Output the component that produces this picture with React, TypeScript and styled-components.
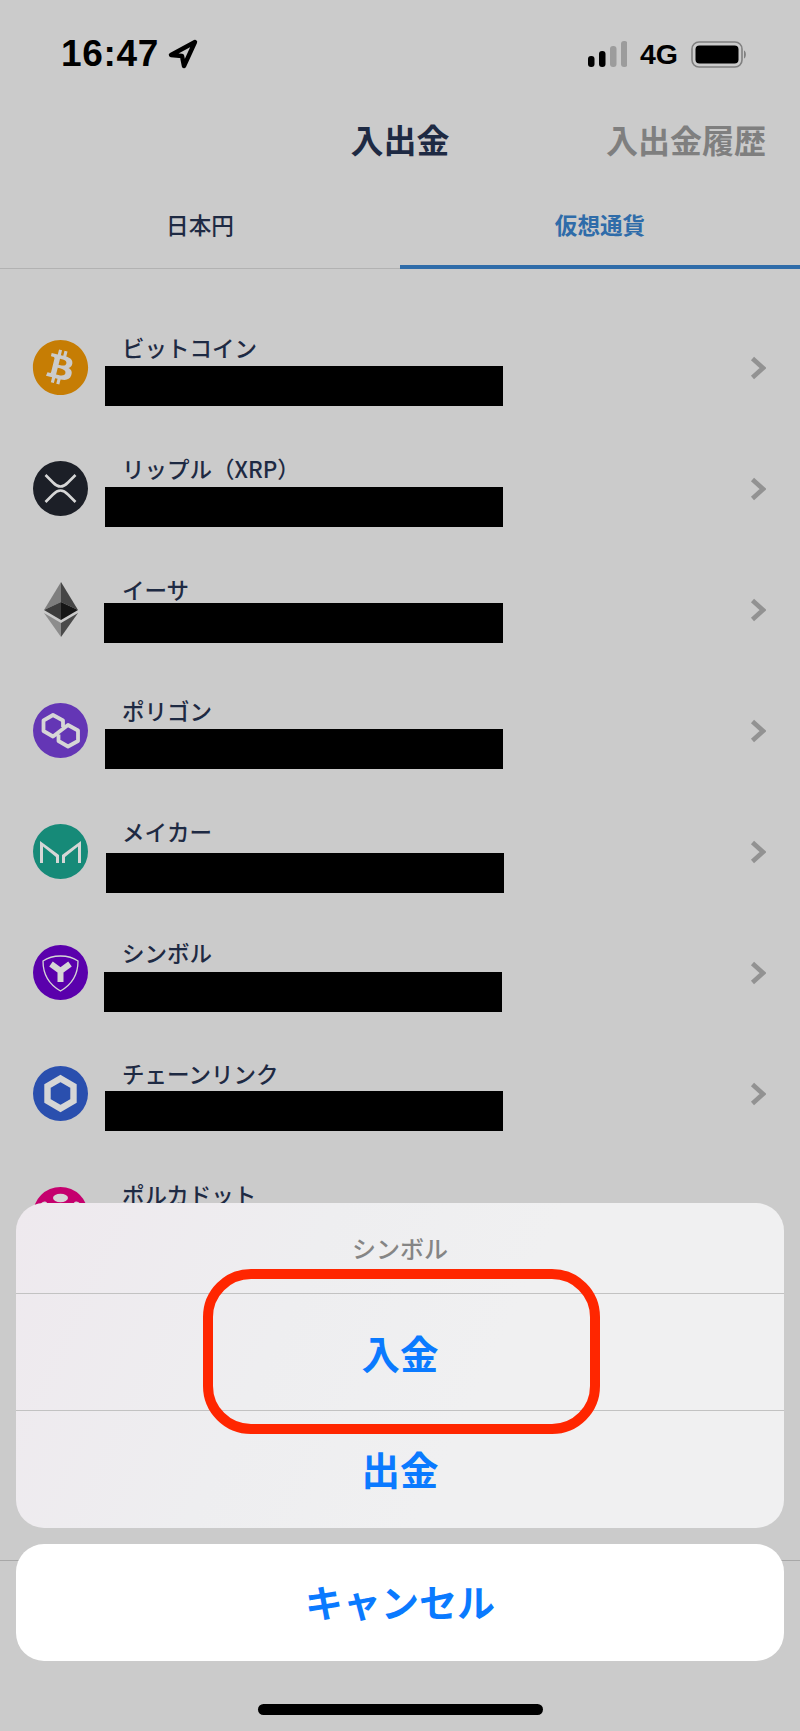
import React from 'react';
import styled, { createGlobalStyle } from 'styled-components';
import { FaBitcoin } from 'react-icons/fa';

const GlobalStyle = createGlobalStyle`
    html, body {
        margin: 0;
        padding: 0;
        background: #cbcbcb;
    }
    * {
        box-sizing: border-box;
    }
`;

const Page = styled.div`
    position: relative;
    width: 800px;
    height: 1731px;
    overflow: hidden;
    background: #cbcbcb;
    font-family: 'Noto Sans CJK JP', 'Liberation Sans', sans-serif;
    color: #1e2a43;
`;

const StatusBar = styled.div`
    height: 106px;
    padding: 2px 53px 0 61px;
    display: flex;
    align-items: center;
    justify-content: space-between;
    color: #000;
    font-family: 'Liberation Sans', sans-serif;
    font-weight: 700;
`;

const StatusGroup = styled.div`
    display: flex;
    align-items: center;
    gap: ${(p: { $gap: number }) => p.$gap}px;
`;

const Time = styled.span`
    font-size: 37px;
    letter-spacing: 0.7px;
    line-height: 40px;
`;

const Network = styled.span`
    margin: 0 1px;
    font-size: 28.5px;
    line-height: 30px;
`;

const NavBar = styled.div`
    height: 70px;
    padding: 0 34px 4px 0;
    display: grid;
    grid-template-columns: 1fr auto 1fr;
    align-items: center;
`;

const NavTitle = styled.div`
    grid-column: 2;
    font-size: 33px;
    line-height: 40px;
    font-weight: 700;
    margin-left: 34px;
`;

const NavLink = styled.div`
    justify-self: end;
    font-size: 32px;
    line-height: 40px;
    font-weight: 700;
    color: #7f7f7f;
`;

const Tabs = styled.div`
    height: 93px;
    display: flex;
    border-bottom: 1px solid #b2b2b2;
`;

const Tab = styled.div<{ $active?: boolean }>`
    flex: 1;
    height: ${(p) => (p.$active ? 93 : 92)}px;
    padding-top: 34px;
    text-align: center;
    font-size: 22.6px;
    line-height: 30px;
    font-weight: ${(p) => (p.$active ? 700 : 500)};
    color: ${(p) => (p.$active ? '#2f6ca9' : '#1e2a43')};
    border-bottom: ${(p) => (p.$active ? '4px solid #2f6ca9' : 'none')};
`;

const CoinList = styled.div`
    padding-top: 38px;
`;

const CoinRow = styled.div`
    position: relative;
    height: 121px;
    padding: 0 34px 0 33px;
    display: grid;
    grid-template-columns: 55px 1fr 16px;
    align-items: center;
`;

const IconBox = styled.div`
    width: 55px;
    height: 55px;
    display: flex;
    align-items: center;
    justify-content: center;
`;

const CoinName = styled.div`
    margin: 0 0 42px 34px;
    font-size: 22.5px;
    line-height: 28px;
    font-weight: 500;
    white-space: nowrap;
`;

// black bars painted over the balances
const Redaction = styled.div<{ $top: number; $left: number; $right: number }>`
    position: absolute;
    top: ${(p) => p.$top}px;
    left: ${(p) => p.$left}px;
    width: ${(p) => p.$right - p.$left}px;
    height: 40px;
    background: #000;
`;

const TabBarLine = styled.div`
    position: absolute;
    left: 0;
    right: 0;
    top: 1560px;
    height: 1px;
    background: #a8a8a8;
`;

const Sheet = styled.div`
    position: absolute;
    left: 16px;
    right: 16px;
    top: 1203px;
    display: flex;
    flex-direction: column;
    gap: 16px;
`;

const ActionGroup = styled.div`
    height: 325px;
    border-radius: 28px;
    overflow: hidden;
    background: linear-gradient(115deg, #eee9ee 0%, #eeeef0 35%, #f0f0f1 60%, #f0f0f1 100%);
    display: flex;
    flex-direction: column;
`;

const SheetTitle = styled.div`
    height: 91px;
    padding-bottom: 2px;
    display: flex;
    align-items: center;
    justify-content: center;
    font-size: 24px;
    font-weight: 500;
    color: #858585;
    border-bottom: 1px solid #c2c2c2;
`;

const SheetAction = styled.div<{ $divider?: boolean }>`
    height: 117px;
    padding-bottom: ${(p) => (p.$divider ? 0 : 4)}px;
    display: flex;
    align-items: center;
    justify-content: center;
    font-size: 38.5px;
    font-weight: 700;
    color: #0a7aff;
    border-bottom: ${(p) => (p.$divider ? '1px solid #c2c2c2' : 'none')};
`;

const CancelButton = styled.div`
    height: 117px;
    padding-bottom: 4px;
    border-radius: 28px;
    background: #fff;
    display: flex;
    align-items: center;
    justify-content: center;
    font-size: 38px;
    font-weight: 700;
    color: #0a7aff;
`;

const Highlight = styled.div`
    position: absolute;
    left: 203px;
    top: 1269px;
    width: 397px;
    height: 165px;
    border: 10px solid #ff2600;
    border-radius: 48px;
`;

const HomeIndicator = styled.div`
    position: absolute;
    left: 258px;
    top: 1704px;
    width: 285px;
    height: 11px;
    border-radius: 6px;
    background: #000;
`;

const BitcoinGlyph = styled(FaBitcoin)`
    flex-shrink: 0;
`;

const GLYPH = '#d6d6d6';

const Disc: React.FC<{ color: string; children?: React.ReactNode }> = ({ color, children }) => (
    <svg width="55" height="55" viewBox="0 0 55 55">
        <circle cx="27.5" cy="27.5" r="27.5" fill={color} />
        {children}
    </svg>
);

const BitcoinIcon = () => <BitcoinGlyph size={57} color="#c67d04" />;

const XrpIcon = () => (
    <Disc color="#1c1f27">
        <path
            d="M12.5 14 L20 21.5 Q27.5 29.5 35 21.5 L42.5 14 M12.5 41 L20 33.5 Q27.5 25.5 35 33.5 L42.5 41"
            fill="none"
            stroke={GLYPH}
            strokeWidth="2.6"
        />
    </Disc>
);

const EthereumIcon = () => (
    <svg width="34" height="55" viewBox="0 0 34 55">
        <polygon points="17,0 0,28 17,20" fill="#7e7e7e" />
        <polygon points="17,0 34,28 17,20" fill="#454545" />
        <polygon points="0,28 17,20 17,38" fill="#3d3d3d" />
        <polygon points="34,28 17,20 17,38" fill="#161616" />
        <polygon points="0,31 17,41 17,55" fill="#8c8c8c" />
        <polygon points="34,31 17,41 17,55" fill="#4a4a4a" />
    </svg>
);

const PolygonIcon = () => (
    <Disc color="#6436b5">
        <path
            d="M30 24V17.5L20 12L10.5 17.5V28L20 33.5L35 22L45 27.5V38L35 43.5L25.5 38V31.5"
            fill="none"
            stroke={GLYPH}
            strokeWidth="3.8"
            strokeLinejoin="round"
        />
    </Disc>
);

const MakerIcon = () => (
    <Disc color="#168a78">
        <path d="M7 39V17L26 31V39H23V33L10 22.5V39Z" fill={GLYPH} />
        <path d="M48 39V17L29 31V39H32V33L45 22.5V39Z" fill={GLYPH} />
    </Disc>
);

const SymbolIcon = () => (
    <Disc color="#5a00ac">
        <path
            d="M27.5 11 Q38 11 45 16 Q45 36 27.5 46 Q10 36 10 16 Q17 11 27.5 11Z"
            fill="none"
            stroke={GLYPH}
            strokeWidth="1.3"
        />
        <path d="M18 19 L27.5 26 L37 19 M27.5 26 V37" fill="none" stroke={GLYPH} strokeWidth="6" />
    </Disc>
);

const ChainlinkIcon = () => (
    <Disc color="#2a4fae">
        <polygon
            points="27.5,12.5 40.5,20 40.5,35 27.5,42.5 14.5,35 14.5,20"
            fill="none"
            stroke={GLYPH}
            strokeWidth="6.4"
        />
    </Disc>
);

const PolkadotIcon = () => (
    <Disc color="#c5006e">
        <ellipse cx="27.5" cy="11" rx="7.5" ry="4.2" fill={GLYPH} />
        <ellipse cx="10" cy="20" rx="6" ry="3.8" fill={GLYPH} transform="rotate(-60 10 20)" />
        <ellipse cx="45" cy="20" rx="6" ry="3.8" fill={GLYPH} transform="rotate(60 45 20)" />
    </Disc>
);

const Chevron = () => (
    <svg width="16" height="24" viewBox="0 0 16 24">
        <path d="M2.5 2.5 L13 12 L2.5 21.5" fill="none" stroke="#929292" strokeWidth="4.6" />
    </svg>
);

const LocationArrow = () => (
    <svg width="30" height="30" viewBox="0 0 30 30">
        <path d="M27 3 L3 16 L14 17 L16 27 Z" fill="none" stroke="#000" strokeWidth="4.4" strokeLinejoin="round" />
    </svg>
);

const SignalBars = () => (
    <svg width="39" height="26" viewBox="0 0 39 26">
        <rect x="0" y="15" width="6.5" height="11" rx="3" fill="#000" />
        <rect x="11" y="10" width="6.5" height="16" rx="3" fill="#000" />
        <rect x="22" y="5" width="6.5" height="21" rx="3" fill="#9c9c9c" />
        <rect x="33" y="0" width="6.5" height="26" rx="3" fill="#9c9c9c" />
    </svg>
);

const Battery = () => (
    <svg width="56" height="27" viewBox="0 0 56 27">
        <rect x="1" y="1" width="50" height="25" rx="7" fill="none" stroke="#808080" strokeWidth="1.6" />
        <rect x="4.5" y="4.5" width="43" height="18" rx="4" fill="#000" />
        <path d="M53 9.5 C55.5 10.5 55.5 16.5 53 17.5 Z" fill="#808080" />
    </svg>
);

const coins = [
    { name: 'ビットコイン', icon: <BitcoinIcon />, top: 59, left: 105, right: 503 },
    { name: 'リップル（XRP）', icon: <XrpIcon />, top: 59, left: 105, right: 503 },
    { name: 'イーサ', icon: <EthereumIcon />, top: 54, left: 104, right: 503 },
    { name: 'ポリゴン', icon: <PolygonIcon />, top: 59, left: 105, right: 503 },
    { name: 'メイカー', icon: <MakerIcon />, top: 62, left: 106, right: 504 },
    { name: 'シンボル', icon: <SymbolIcon />, top: 60, left: 104, right: 502 },
    { name: 'チェーンリンク', icon: <ChainlinkIcon />, top: 58, left: 105, right: 503 },
    { name: 'ポルカドット', icon: <PolkadotIcon /> },
];

const App: React.FC = () => {
    return (
        <Page>
            <GlobalStyle />
            <StatusBar>
                <StatusGroup $gap={9}>
                    <Time>16:47</Time>
                    <LocationArrow />
                </StatusGroup>
                <StatusGroup $gap={12}>
                    <SignalBars />
                    <Network>4G</Network>
                    <Battery />
                </StatusGroup>
            </StatusBar>
            <NavBar>
                <NavTitle>入出金</NavTitle>
                <NavLink>入出金履歴</NavLink>
            </NavBar>
            <Tabs>
                <Tab>日本円</Tab>
                <Tab $active>仮想通貨</Tab>
            </Tabs>
            <CoinList>
                {coins.map((coin) => (
                    <CoinRow key={coin.name}>
                        <IconBox>{coin.icon}</IconBox>
                        <CoinName>{coin.name}</CoinName>
                        <Chevron />
                        {coin.top !== undefined && (
                            <Redaction $top={coin.top} $left={coin.left} $right={coin.right} />
                        )}
                    </CoinRow>
                ))}
            </CoinList>
            <TabBarLine />
            <Sheet>
                <ActionGroup>
                    <SheetTitle>シンボル</SheetTitle>
                    <SheetAction $divider>入金</SheetAction>
                    <SheetAction>出金</SheetAction>
                </ActionGroup>
                <CancelButton>キャンセル</CancelButton>
            </Sheet>
            <Highlight />
            <HomeIndicator />
        </Page>
    );
};

export default App;
